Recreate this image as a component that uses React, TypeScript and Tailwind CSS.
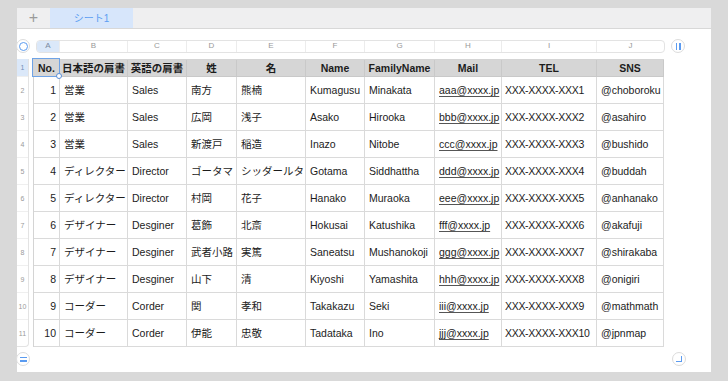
import React from "react";

const letters = ["A", "B", "C", "D", "E", "F", "G", "H", "I", "J"];
const header = ["No.", "日本語の肩書", "英語の肩書", "姓", "名", "Name", "FamilyName", "Mail", "TEL", "SNS"];
const data: (string | number)[][] = [
  [1, "営業", "Sales", "南方", "熊楠", "Kumagusu", "Minakata", "aaa@xxxx.jp", "XXX-XXXX-XXX1", "@choboroku"],
  [2, "営業", "Sales", "広岡", "浅子", "Asako", "Hirooka", "bbb@xxxx.jp", "XXX-XXXX-XXX2", "@asahiro"],
  [3, "営業", "Sales", "新渡戸", "稲造", "Inazo", "Nitobe", "ccc@xxxx.jp", "XXX-XXXX-XXX3", "@bushido"],
  [4, "ディレクター", "Director", "ゴータマ", "シッダールタ", "Gotama", "Siddhattha", "ddd@xxxx.jp", "XXX-XXXX-XXX4", "@buddah"],
  [5, "ディレクター", "Director", "村岡", "花子", "Hanako", "Muraoka", "eee@xxxx.jp", "XXX-XXXX-XXX5", "@anhanako"],
  [6, "デザイナー", "Desginer", "葛飾", "北斎", "Hokusai", "Katushika", "fff@xxxx.jp", "XXX-XXXX-XXX6", "@akafuji"],
  [7, "デザイナー", "Desginer", "武者小路", "実篤", "Saneatsu", "Mushanokoji", "ggg@xxxx.jp", "XXX-XXXX-XXX7", "@shirakaba"],
  [8, "デザイナー", "Desginer", "山下", "清", "Kiyoshi", "Yamashita", "hhh@xxxx.jp", "XXX-XXXX-XXX8", "@onigiri"],
  [9, "コーダー", "Corder", "関", "孝和", "Takakazu", "Seki", "iii@xxxx.jp", "XXX-XXXX-XXX9", "@mathmath"],
  [10, "コーダー", "Corder", "伊能", "忠敬", "Tadataka", "Ino", "jjj@xxxx.jp", "XXX-XXXX-XXX10", "@jpnmap"],
];

const font = { fontFamily: '"Liberation Sans", "Noto Sans CJK JP", sans-serif' };

function Circle({ children }: { children: React.ReactNode }) {
  return (
    <div className="w-[14px] h-[14px] rounded-full border border-[#dcdcdc] bg-white flex items-center justify-center">
      {children}
    </div>
  );
}

const colW = [
  "w-[23px] bg-[#dbe8f9] text-[#7a8aa0]",
  "w-[68px]",
  "w-[59px]",
  "w-[50px]",
  "w-[69px]",
  "w-[59px]",
  "w-[70px]",
  "w-[67px]",
  "w-[95px]",
  "w-[67px]",
];

export default function App() {
  return (
    <div className="w-[728px] h-[381px] bg-[#d9d9d9] pt-[8px] pl-[17px] overflow-hidden" style={font}>
      <div className="w-[694px] h-[364px] bg-white flex flex-col">
        {/* tab bar */}
        <div className="h-[21px] bg-[#efeff0] border-b border-[#d8d8d8] flex items-stretch">
          <div className="w-[33px] flex items-center justify-center text-[#9a9a9a] text-[16px] font-light leading-none pb-[1px]">+</div>
          <div className="w-[83px] bg-[#d7e6fb] flex items-center justify-center text-[10px] text-[#5c9ef2]">シート1</div>
        </div>
        {/* column header row */}
        <div className="flex items-center mt-[10px] h-[14px]">
          <div className="-ml-[1px]">
            <Circle>
              <div className="w-[9px] h-[9px] rounded-full border-[1.5px] border-[#5b9bf0]" />
            </Circle>
          </div>
          <div className="ml-[6px] flex h-[13px] border border-[#e3e3e3] rounded-[4px] overflow-hidden text-[8px] text-[#999] leading-none">
            {letters.map((l, i) => (
              <div
                key={l}
                className={"flex items-center justify-center border-r border-[#ececec] last:border-r-0 " + colW[i]}
              >
                {l}
              </div>
            ))}
          </div>
          <div className="ml-[6px]">
            <Circle>
              <div className="flex gap-[2px]">
                <div className="w-[1.5px] h-[7px] bg-[#5b9bf0]" />
                <div className="w-[1.5px] h-[7px] bg-[#5b9bf0]" />
              </div>
            </Circle>
          </div>
        </div>
        {/* body */}
        <div className="flex mt-[6px]">
          {/* row header */}
          <div className="w-[12px] flex flex-col border-r border-b border-[#e3e3e3] rounded-br-[4px] text-[7px] text-[#9a9a9a] leading-none">
            <div className="h-[17px] bg-[#dbe8f9] flex items-center justify-center text-[#6f8fb8]">1</div>
            {data.map((_, i) => (
              <div key={i} className="h-[27px] flex items-center justify-center border-t border-[#efefef]">
                {i + 2}
              </div>
            ))}
          </div>
          {/* table */}
          <div className="ml-[4px] relative">
            <div className="grid grid-cols-[26px_68px_59px_50px_69px_59px_70px_67px_95px_67px] border-l border-t border-[#d4d4d4] text-[10.5px] text-[#1c1c1c]">
              {header.map((h) => (
                <div
                  key={h}
                  className="h-[17px] bg-[#d6d6d6] border-r border-b border-[#c9c9c9] flex items-center justify-center font-bold whitespace-nowrap overflow-hidden leading-none"
                >
                  {h}
                </div>
              ))}
              {data.map((row, r) =>
                row.map((c, i) => (
                  <div
                    key={r + "-" + i}
                    className={
                      "h-[27px] border-r border-b border-[#dadada] flex items-center whitespace-nowrap overflow-hidden leading-none " +
                      (i === 0 ? "justify-end pr-[3px]" : i === 8 ? "pl-[3px] tracking-[-0.3px]" : "pl-[4px]")
                    }
                  >
                    {i === 7 ? <span className="underline underline-offset-[2px] decoration-[#555]">{c}</span> : c}
                  </div>
                ))
              )}
            </div>
            {/* selection */}
            <div className="absolute left-[-1px] top-[-1px] w-[28px] h-[19px] border border-[#6fa3e6]" />
            <div className="absolute left-[23px] top-[14px] w-[6px] h-[6px] rounded-full border border-[#5b8fd6] bg-white" />
          </div>
        </div>
        {/* bottom */}
        <div className="flex items-center justify-between mt-[5px] w-[669px]">
          <div className="-ml-[1px]">
            <Circle>
              <div className="flex flex-col gap-[2px]">
                <div className="w-[7px] h-[1.5px] bg-[#5b9bf0]" />
                <div className="w-[7px] h-[1.5px] bg-[#5b9bf0]" />
              </div>
            </Circle>
          </div>
          <Circle>
            <div className="w-[6px] h-[6px] border-r-[1.5px] border-b-[1.5px] border-[#5b9bf0]" />
          </Circle>
        </div>
      </div>
    </div>
  );
}
